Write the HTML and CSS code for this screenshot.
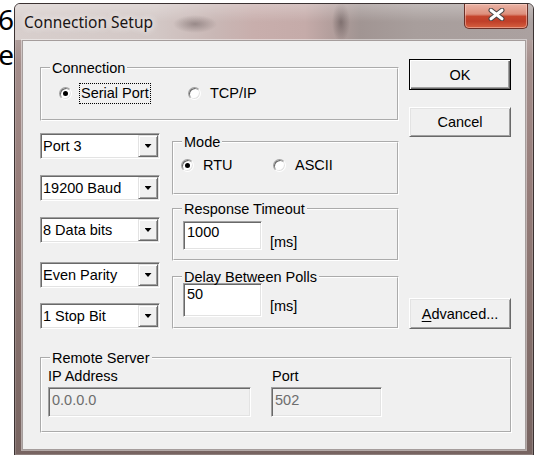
FILE: index.html
```html
<!DOCTYPE html>
<html lang="en">
<head>
<meta charset="utf-8">
<title>Connection Setup</title>
<link rel="stylesheet" href="styles.css">
</head>
<body>
<div class="desktop">
  <div class="backdrop-text">
    <span>6</span>
    <span>e</span>
  </div>

  <div class="window" role="dialog" aria-label="Connection Setup">
    <div class="titlebar">
      <span class="title">Connection Setup</span>
      <span class="close-btn" aria-label="Close">
        <svg width="17" height="13" viewBox="0 0 17 13">
          <path d="M3 2.2 L14 10.8 M14 2.2 L3 10.8" stroke="#4a4444" stroke-width="5" stroke-linecap="round"/>
          <path d="M3 2.2 L14 10.8 M14 2.2 L3 10.8" stroke="#ffffff" stroke-width="3" stroke-linecap="round"/>
        </svg>
      </span>
    </div>

    <div class="frame-body">
      <div class="client">
        <div class="top">
          <div class="main">
            <fieldset class="group connection">
              <legend>Connection</legend>
              <div class="radio-row">
                <span class="radio checked"><span class="radio-mark"></span><span class="radio-text focused">Serial Port</span></span>
                <span class="radio"><span class="radio-mark"></span><span class="radio-text">TCP/IP</span></span>
              </div>
            </fieldset>

            <div class="settings">
              <div class="combos">
                <div class="combo"><span class="combo-value">Port 3</span><span class="combo-button"></span></div>
                <div class="combo"><span class="combo-value">19200 Baud</span><span class="combo-button"></span></div>
                <div class="combo"><span class="combo-value">8 Data bits</span><span class="combo-button"></span></div>
                <div class="combo parity"><span class="combo-value">Even Parity</span><span class="combo-button"></span></div>
                <div class="combo stop"><span class="combo-value">1 Stop Bit</span><span class="combo-button"></span></div>
              </div>

              <div class="groups">
                <fieldset class="group mode">
                  <legend>Mode</legend>
                  <div class="radio-row">
                    <span class="radio checked"><span class="radio-mark"></span><span class="radio-text">RTU</span></span>
                    <span class="radio"><span class="radio-mark"></span><span class="radio-text">ASCII</span></span>
                  </div>
                </fieldset>

                <fieldset class="group response">
                  <legend>Response Timeout</legend>
                  <div class="field-row">
                    <span class="edit">1000</span>
                    <span class="unit">[ms]</span>
                  </div>
                </fieldset>

                <fieldset class="group delay">
                  <legend>Delay Between Polls</legend>
                  <div class="field-row">
                    <span class="edit tall">50</span>
                    <span class="unit">[ms]</span>
                  </div>
                </fieldset>
              </div>
            </div>
          </div>

          <div class="side">
            <button class="btn default">OK</button>
            <button class="btn cancel">Cancel</button>
            <button class="btn advanced"><u>A</u>dvanced...</button>
          </div>
        </div>

        <fieldset class="group remote">
          <legend>Remote Server</legend>
          <div class="remote-grid">
            <span class="field-label">IP Address</span>
            <span class="field-label port-label">Port</span>
            <span class="edit disabled">0.0.0.0</span>
            <span class="edit disabled">502</span>
          </div>
        </fieldset>
      </div>
    </div>
  </div>
</div>
</body>
</html>
```

FILE: styles.css
```css
* {
  box-sizing: border-box;
}

html,
body {
  margin: 0;
  padding: 0;
}

body {
  width: 535px;
  height: 455px;
  overflow: hidden;
  background: #ffffff;
  font-family: "Liberation Sans", Arial, sans-serif;
  font-size: 14.5px;
  color: #000000;
}

.desktop {
  position: relative;
  width: 535px;
  height: 455px;
}

/* text of the document lying behind the dialog */
.backdrop-text {
  display: flex;
  flex-direction: column;
  align-items: flex-end;
  width: 14px;
  padding-top: 2px;
  font: 28px/35px "Noto Sans", "Open Sans", sans-serif;
  color: #000000;
}

/* ---------- window frame ---------- */
.window {
  position: absolute;
  left: 14px;
  top: 3px;
  width: 520px;
  height: 453px;
  display: flex;
  flex-direction: column;
  border: 1px solid #3b3232;
  border-radius: 6px 6px 0 0;
  background: linear-gradient(180deg, #c4b7b5 0px, #a48e8b 60px, #967d7a 180px, #85706c 320px, #776461 100%);
  box-shadow: inset 0 0 0 1px rgba(255, 255, 255, 0.18);
}

.titlebar {
  display: flex;
  justify-content: space-between;
  align-items: flex-start;
  height: 36px;
  padding-left: 9px;
  border-radius: 5px 5px 0 0;
  background:
    linear-gradient(180deg, rgba(255, 255, 255, 0.28) 0px, rgba(255, 255, 255, 0) 18px),
    radial-gradient(22px 9px at 180px 20px, rgba(110, 96, 96, 0.55), rgba(110, 96, 96, 0)),
    radial-gradient(9px 20px at 326px 18px, rgba(90, 78, 78, 0.55), rgba(90, 78, 78, 0)),
    linear-gradient(90deg, #d8cfcd 0px, #d3c8c6 140px, #c9b7b5 200px, #c8aeac 240px, #c5aba9 290px, #b49f9d 315px, #a19593 345px, #a89e9c 400px, #aba1a0 100%);
}

.title {
  padding-top: 8px;
  font: 15.5px/21px "Noto Sans", "Open Sans", sans-serif;
  color: #1a1414;
  text-shadow: 0 0 6px rgba(255, 255, 255, 0.9), 0 0 10px rgba(255, 255, 255, 0.6);
}

.close-btn {
  display: flex;
  justify-content: center;
  align-items: center;
  width: 64px;
  height: 25px;
  margin-right: 5px;
  padding-bottom: 4px;
  border: 1px solid #6a3028;
  border-top: none;
  border-radius: 0 0 5px 5px;
  background: linear-gradient(180deg, #eab4a6 0%, #dd8f7c 42%, #c5452d 52%, #bf3f29 72%, #d6603f 100%);
  box-shadow: inset 0 0 0 1px rgba(255, 220, 210, 0.45);
}

.frame-body {
  flex: 1;
  padding: 0 7px 5px;
}

/* ---------- dialog client area ---------- */
.client {
  height: 410px;
  padding: 18px 14px 0 17px;
  background: #f0f0f0;
  border: 1px solid #a59d9c;
  box-shadow: 0 0 0 1px rgba(255, 255, 255, 0.45);
}

.top {
  display: flex;
  gap: 10px;
}

.main {
  width: 359px;
}

.side {
  display: flex;
  flex-direction: column;
  width: 102px;
}

/* etched group boxes */
.group {
  margin: 0;
  padding: 0;
  min-width: 0;
  border: 2px groove #ffffff;
}

.group legend {
  position: relative;
  z-index: 1;
  margin-left: 8px;
  padding: 0 2px;
  font: inherit;
  line-height: 16px;
}

.connection {
  margin-top: 1px;
  padding-bottom: 15px;
}

.radio-row {
  display: flex;
  align-items: center;
  height: 21px;
}

.connection .radio-row {
  margin-top: 7px;
  padding-left: 17px;
}

.connection .radio:first-child {
  width: 129px;
}

.mode {
  margin-top: 1px;
  padding-bottom: 17px;
}

.mode .radio-row {
  margin-top: 5px;
  padding-left: 7px;
}

.mode .radio:first-child {
  width: 92px;
}

.radio {
  display: flex;
  align-items: center;
}

.radio-mark {
  position: relative;
  width: 13px;
  height: 13px;
  margin-right: 7px;
  border-radius: 50%;
  background: #ffffff;
  border: 1px solid;
  border-color: #a0a0a0 #ffffff #ffffff #a0a0a0;
  box-shadow: inset 1px 1px 0 #696969, inset -1px -1px 0 #e3e3e3;
}

.radio.checked .radio-mark::after {
  content: "";
  position: absolute;
  left: 3px;
  top: 3px;
  width: 5px;
  height: 5px;
  border-radius: 50%;
  background: #000000;
}

.radio-text {
  padding: 0 1px;
  line-height: 19px;
  border: 1px dotted transparent;
}

.radio-text.focused {
  border-color: #000000;
}

/* left column of drop-down lists */
.settings {
  display: flex;
  gap: 12px;
  margin-top: 12px;
}

.combos {
  display: flex;
  flex-direction: column;
  width: 120px;
}

.combo {
  display: flex;
  height: 26px;
  background: #ffffff;
  border: 1px solid;
  border-color: #a0a0a0 #ffffff #ffffff #a0a0a0;
  box-shadow: inset 1px 1px 0 #696969, inset -1px -1px 0 #e3e3e3;
  padding: 1px;
}

.combo + .combo {
  margin-top: 16px;
}

.combo.parity {
  margin-top: 19px;
}

.combo.stop {
  margin-top: 15px;
}

.combo-value {
  flex: 1;
  padding-left: 1px;
  line-height: 22px;
  white-space: nowrap;
}

.combo-button {
  display: flex;
  justify-content: center;
  align-items: center;
  width: 20px;
  height: 22px;
  background: #f0f0f0;
  border: 1px solid;
  border-color: #e3e3e3 #696969 #696969 #e3e3e3;
  box-shadow: inset 1px 1px 0 #ffffff, inset -1px -1px 0 #a0a0a0;
}

.combo-button::after {
  content: "";
  width: 7px;
  height: 4px;
  background: #000000;
  clip-path: polygon(0 0, 100% 0, 50% 100%);
}

.groups {
  display: flex;
  flex-direction: column;
  width: 227px;
}

.response {
  margin-top: 6px;
  padding-bottom: 9px;
}

.delay {
  margin-top: 8px;
  padding-bottom: 10px;
}

.field-row {
  display: flex;
  align-items: center;
  gap: 8px;
  padding-left: 9px;
}

.response .field-row {
  margin-top: 4px;
}

.delay .field-row {
  margin-top: -2px;
}

.unit {
  margin-top: 12px;
  line-height: 16px;
}

/* sunken text boxes */
.edit {
  display: block;
  width: 79px;
  height: 29px;
  padding: 2px 3px 0 3px;
  line-height: 16px;
  background: #ffffff;
  border: 1px solid;
  border-color: #a0a0a0 #ffffff #ffffff #a0a0a0;
  box-shadow: inset 1px 1px 0 #696969, inset -1px -1px 0 #e3e3e3;
}

.edit.tall {
  height: 34px;
}

.edit.disabled {
  height: 30px;
  padding-top: 4px;
  background: #f0f0f0;
  color: #6d6d6d;
}

/* push buttons */
.btn {
  display: block;
  width: 102px;
  height: 31px;
  margin: 0;
  padding: 0;
  font: inherit;
  color: #000000;
  background: #f0f0f0;
  border: 1px solid;
  border-color: #ffffff #696969 #696969 #ffffff;
  box-shadow: inset 1px 1px 0 #e3e3e3, inset -1px -1px 0 #a0a0a0;
  cursor: default;
}

.btn.default {
  border: 1px solid #000000;
  box-shadow: inset 1px 1px 0 #ffffff, inset -1px -1px 0 #696969, inset -2px -2px 0 #a0a0a0;
}

.btn.cancel {
  height: 30px;
  margin-top: 17px;
}

.btn.advanced {
  margin-top: auto;
}

.btn u {
  text-decoration-thickness: 1px;
  text-underline-offset: 2px;
}

/* remote server block */
.remote {
  width: 472px;
  margin-top: 21px;
  padding-bottom: 14px;
}

.remote-grid {
  display: grid;
  grid-template-columns: 203px 111px;
  column-gap: 20px;
  row-gap: 3px;
  margin-top: 2px;
  padding-left: 6px;
}

.field-label {
  line-height: 16px;
}

.port-label {
  padding-left: 1px;
}

.remote-grid .edit {
  width: auto;
}
```
